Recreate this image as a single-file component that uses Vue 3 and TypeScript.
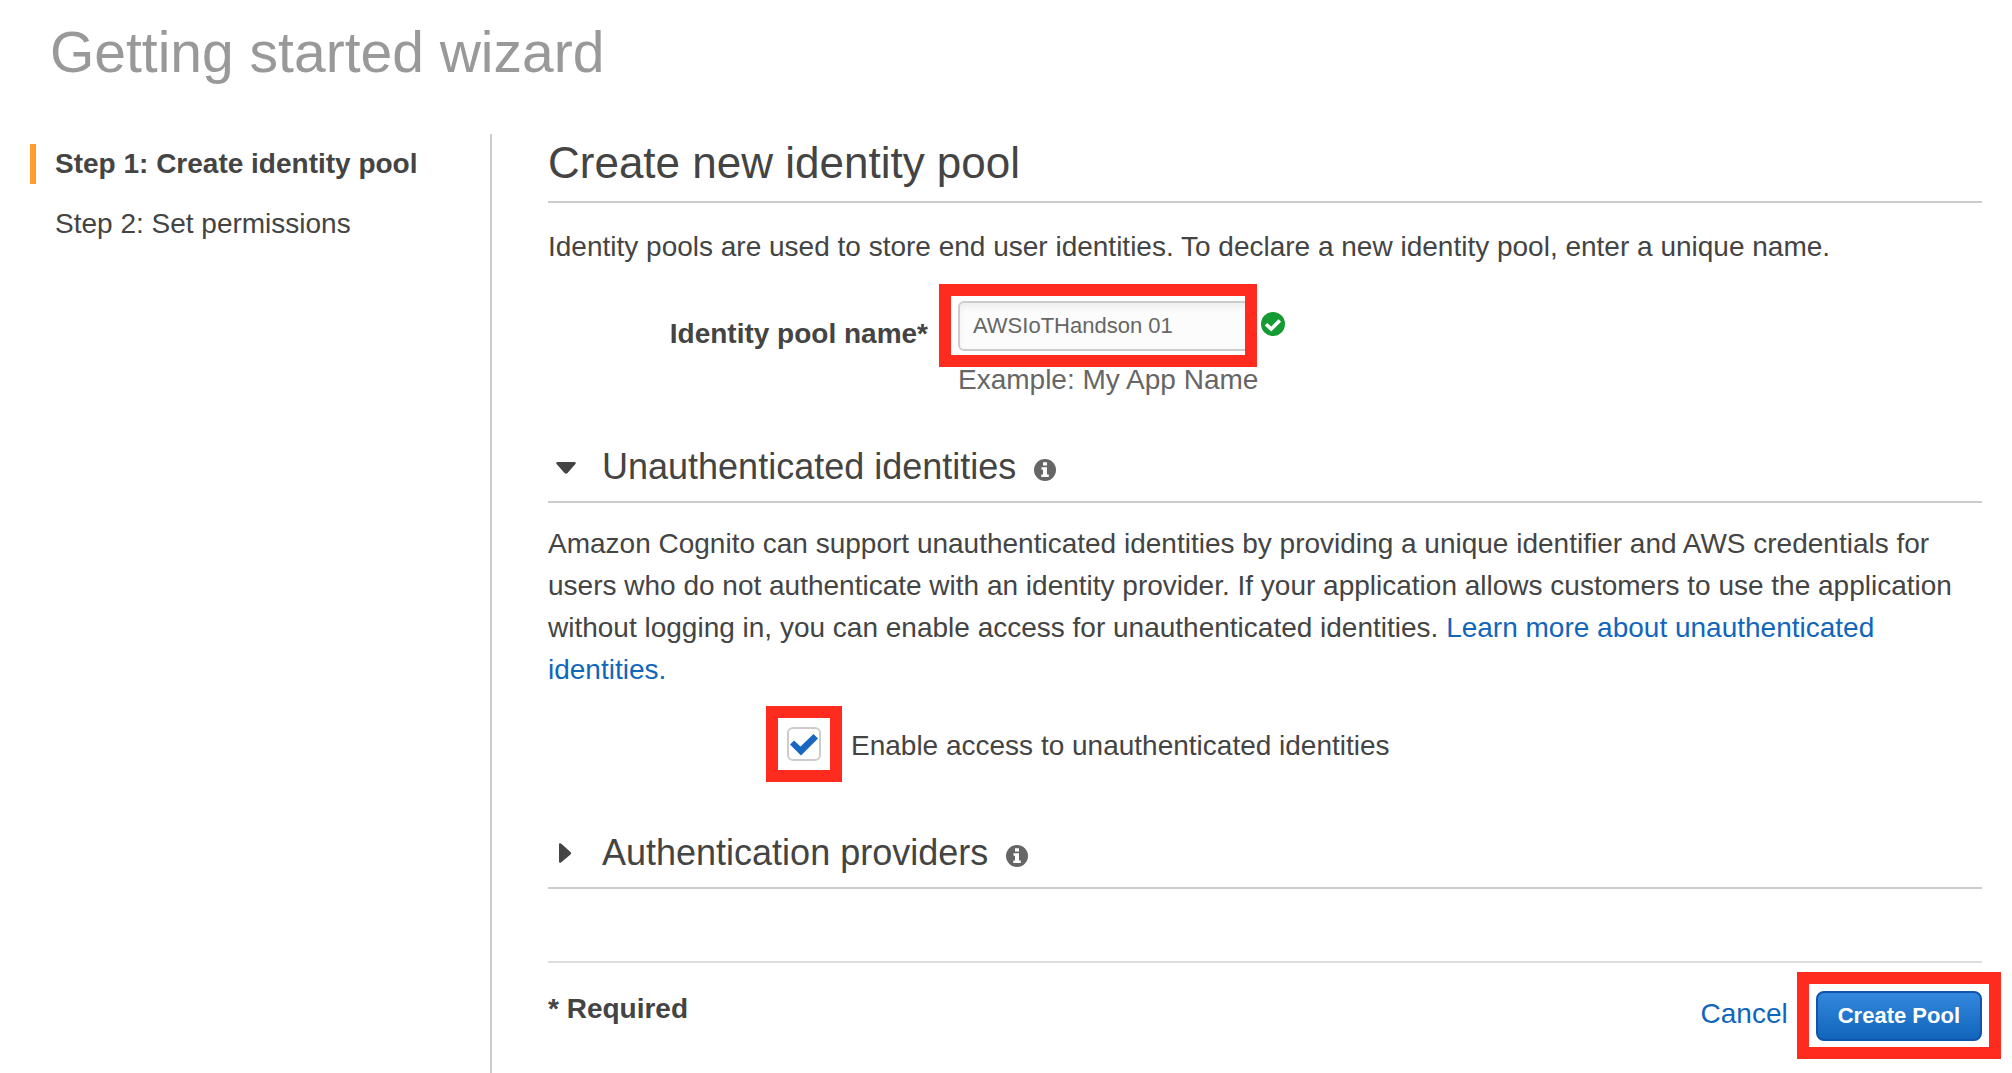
<script setup lang="ts">
import { ref } from 'vue'

interface Step {
  id: number
  label: string
}

const steps: Step[] = [
  { id: 1, label: 'Step 1: Create identity pool' },
  { id: 2, label: 'Step 2: Set permissions' },
]
const currentStep = ref(1)
const poolName = ref('AWSIoTHandson 01')
const allowUnauthenticated = ref(true)
</script>

<template>
  <div class="wizard">
    <header class="wizard-header">
      <h1>Getting started wizard</h1>
    </header>

    <div class="wizard-body">
      <nav class="steps" aria-label="Steps">
        <ol>
          <li v-for="step in steps" :key="step.id" :class="{ active: step.id === currentStep }">
            {{ step.label }}
          </li>
        </ol>
      </nav>

      <main class="content">
        <h2>Create new identity pool</h2>
        <p class="intro">
          Identity pools are used to store end user identities. To declare a new identity pool, enter a unique name.
        </p>

        <div class="field">
          <label for="pool-name">Identity pool name*</label>
          <div class="field-control">
            <div class="field-line">
              <div class="highlight highlight-input">
                <input id="pool-name" v-model="poolName" type="text" aria-describedby="pool-hint" />
              </div>
              <svg class="valid" viewBox="0 0 24 24" aria-hidden="true">
                <circle cx="12" cy="12" r="12" fill="#159b34" />
                <path d="M5 12.200l5.200 4.800L18.800 8.500" fill="none" stroke="#fff" stroke-width="3.600" />
              </svg>
            </div>
            <div id="pool-hint" class="hint">Example: My App Name</div>
          </div>
        </div>

        <section>
          <h3>
            <button type="button" class="toggle" aria-expanded="true">
              <svg class="caret" viewBox="0 0 28 24" aria-hidden="true">
                <path d="M9 7h18q1.500 1 0 2.500l-7.500 8.500q-1.500 1.600-3 0L9 9.500Q7.500 8 9 7z" fill="#444" />
              </svg>
              Unauthenticated identities
            </button>
            <svg class="info" viewBox="0 0 22 22" aria-hidden="true">
              <circle cx="11" cy="11" r="11" fill="#666" />
              <path d="M9 3.200h4v3.200H9zM7.500 8.200H13v7.300h1.800v2.500H7.300v-2.500H9v-4.800H7.500z" fill="#fff" />
            </svg>
          </h3>
          <p class="details">
            Amazon Cognito can support unauthenticated identities by providing a unique identifier and AWS credentials for
            users who do not authenticate with an identity provider. If your application allows customers to use the
            application without logging in, you can enable access for unauthenticated identities.
            <a href="#learn-more">Learn more about unauthenticated identities.</a>
          </p>
          <div class="option">
            <span class="highlight highlight-check">
              <input id="allow-unauth" v-model="allowUnauthenticated" type="checkbox" />
              <svg v-if="allowUnauthenticated" class="tick" viewBox="0 0 34 34" aria-hidden="true">
                <path d="M3 17.500l4-4 6.500 6L26.500 7l4.500 4.500L14 28.500z" fill="#1866c0" />
              </svg>
            </span>
            <label for="allow-unauth">Enable access to unauthenticated identities</label>
          </div>
        </section>

        <section class="providers">
          <h3>
            <button type="button" class="toggle" aria-expanded="false">
              <svg class="caret" viewBox="0 0 28 24" aria-hidden="true">
                <path d="M11 3.500q0-2 2-1l9.500 8.500q1.500 1.200 0 2.400L13 21.500q-2 1-2-1z" fill="#444" />
              </svg>
              Authentication providers
            </button>
            <svg class="info" viewBox="0 0 22 22" aria-hidden="true">
              <circle cx="11" cy="11" r="11" fill="#666" />
              <path d="M9 3.200h4v3.200H9zM7.500 8.200H13v7.300h1.800v2.500H7.300v-2.500H9v-4.800H7.500z" fill="#fff" />
            </svg>
          </h3>
        </section>

        <footer>
          <strong>* Required</strong>
          <div class="actions">
            <a href="#cancel">Cancel</a>
            <span class="highlight highlight-submit">
              <button type="submit" class="primary">Create Pool</button>
            </span>
          </div>
        </footer>
      </main>
    </div>
  </div>
</template>

<style>
body {
  margin: 0;
  background: #fff;
}
</style>

<style scoped>
.wizard {
  display: flex;
  flex-direction: column;
  box-sizing: border-box;
  min-height: 100vh;
  font-family: "Liberation Sans", Arial, sans-serif;
  font-size: 28px;
  line-height: 42px;
  color: #444;
}

h1,
h2,
h3,
p,
ol {
  margin: 0;
  padding: 0;
  font-weight: normal;
}

a {
  color: #1166bb;
  text-decoration: none;
}

.wizard-header {
  padding: 20px 50px 50px;
}

h1 {
  font-size: 57px;
  line-height: 64px;
  color: #999;
}

.wizard-body {
  display: flex;
  flex: 1;
}

.steps {
  flex: 0 0 460px;
  padding: 10px 0 0 30px;
}

ol {
  display: flex;
  flex-direction: column;
  gap: 20px;
  list-style: none;
}

li {
  padding-left: 19px;
  border-left: 6px solid transparent;
  line-height: 40px;
}

li.active {
  border-left-color: #ff9c2e;
  font-weight: bold;
}

.content {
  flex: 1;
  min-width: 0;
  padding: 4px 30px 32px 56px;
  border-left: 2px solid #ccc;
}

h2 {
  padding-bottom: 13px;
  border-bottom: 2px solid #ccc;
  font-size: 44px;
  line-height: 50px;
}

.intro {
  margin-top: 23px;
}

.field {
  display: flex;
  gap: 30px;
  margin-top: 33px;
}

.field > label {
  flex: 0 0 380px;
  padding-top: 12px;
  font-weight: bold;
  text-align: right;
}

.field-line {
  display: flex;
  gap: 11px;
}

/* Red frame drawn over the control it calls attention to */
.highlight {
  position: relative;
  display: block;
}

.highlight::after {
  content: "";
  position: absolute;
  border: 12px solid #ff2b1e;
  pointer-events: none;
}

.highlight-input::after {
  inset: -17px -7px -16px -19px;
}

.highlight-check::after {
  inset: -21px;
}

.highlight-submit::after {
  inset: -19px -19px -18px;
}

#pool-name {
  display: block;
  box-sizing: border-box;
  width: 292px;
  height: 50px;
  margin: 0;
  padding: 0 13px;
  border: 2px solid #ccc;
  border-radius: 6px;
  background: #fcfcfc;
  box-shadow: inset 0 4px 6px #eee;
  font-family: inherit;
  font-size: 22px;
  color: #666;
}

.valid {
  width: 24px;
  height: 24px;
  margin-top: 11px;
}

.hint {
  margin-top: 8px;
  color: #666;
}

section {
  margin-top: 42px;
}

.providers {
  margin-top: 64px;
}

h3 {
  display: flex;
  align-items: center;
  gap: 18px;
  padding-bottom: 10px;
  border-bottom: 2px solid #ccc;
  font-size: 36px;
  line-height: 48px;
}

.toggle {
  display: flex;
  align-items: center;
  gap: 26px;
  padding: 0;
  border: 0;
  background: none;
  font: inherit;
  color: inherit;
}

.caret {
  width: 28px;
  height: 24px;
}

.info {
  width: 22px;
  height: 22px;
  margin-top: 6px;
}

.details {
  margin-top: 20px;
}

.option {
  display: flex;
  align-items: flex-start;
  gap: 30px;
  margin-top: 36px;
  padding-left: 239px;
  line-height: 38px;
}

#allow-unauth {
  display: block;
  box-sizing: border-box;
  width: 34px;
  height: 34px;
  margin: 0;
  appearance: none;
  border: 2px solid #ccc;
  border-radius: 6px;
  background: #fff;
}

.tick {
  position: absolute;
  inset: 0;
  pointer-events: none;
}

footer {
  display: flex;
  justify-content: space-between;
  margin-top: 72px;
  padding-top: 28px;
  border-top: 2px solid #ddd;
  line-height: 36px;
}

.actions {
  display: flex;
  gap: 28px;
  line-height: 46px;
}

.primary {
  display: block;
  box-sizing: border-box;
  height: 50px;
  padding: 0 20px;
  border: 2px solid #1155aa;
  border-radius: 8px;
  background: linear-gradient(#3388dd, #1166bb);
  font-family: inherit;
  font-size: 22px;
  font-weight: bold;
  color: #fff;
}
</style>
